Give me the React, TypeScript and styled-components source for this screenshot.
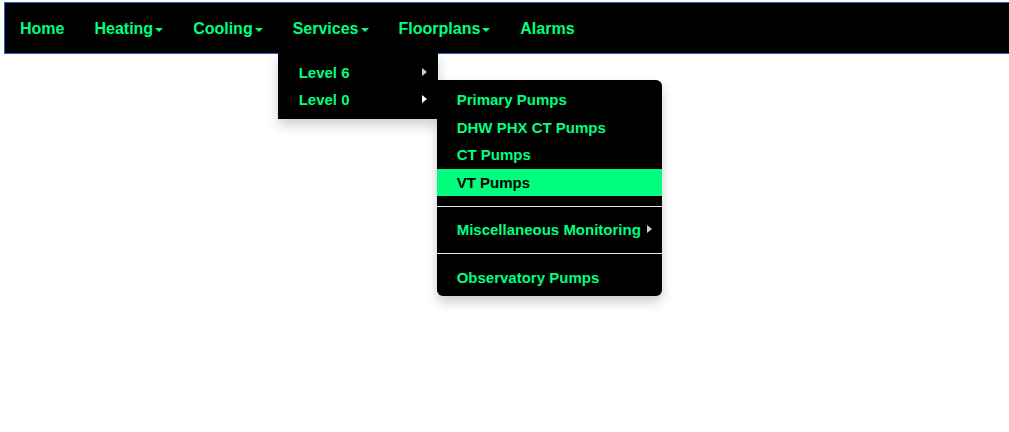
import { FC } from 'react';
import styled, { createGlobalStyle } from 'styled-components';

const GlobalStyle = createGlobalStyle`
  html, body {
    margin: 0;
    padding: 0;
    background: #fff;
    overflow: hidden;
  }
  body {
    font-family: "Liberation Sans", Arial, sans-serif;
  }
`;

type MenuEntry =
  | { kind: 'item'; label: string; active?: boolean; sub?: boolean }
  | { kind: 'divider' };

const pumpMenu: MenuEntry[] = [
  { kind: 'item', label: 'Primary Pumps' },
  { kind: 'item', label: 'DHW PHX CT Pumps' },
  { kind: 'item', label: 'CT Pumps' },
  { kind: 'item', label: 'VT Pumps', active: true },
  { kind: 'divider' },
  { kind: 'item', label: 'Miscellaneous Monitoring', sub: true },
  { kind: 'divider' },
  { kind: 'item', label: 'Observatory Pumps' },
];

const navItems = [
  { label: 'Home', caret: false },
  { label: 'Heating', caret: true },
  { label: 'Cooling', caret: true },
  { label: 'Services', caret: true, open: true },
  { label: 'Floorplans', caret: true },
  { label: 'Alarms', caret: false },
];

const ServicesMenu: FC = () => (
  <Dropdown>
    <DropItem>
      <DropLink>Level 6</DropLink>
      <SideCaret />
    </DropItem>
    <DropItem>
      <DropLink>Level 0</DropLink>
      <SideCaret $open />
      <SubMenu>
        {pumpMenu.map((entry, i) =>
          entry.kind === 'divider' ? (
            <Divider key={i} />
          ) : (
            <DropItem key={i}>
              <DropLink $active={entry.active} $tall>
                {entry.label}
              </DropLink>
              {entry.sub && <SideCaret />}
            </DropItem>
          ),
        )}
      </SubMenu>
    </DropItem>
  </Dropdown>
);

export default function App() {
  return (
    <>
      <GlobalStyle />
      <Page>
        <Navbar>
          <NavList>
            {navItems.map((item) => (
              <NavItem key={item.label}>
                <NavLink>
                  {item.label}
                  {item.caret && <DownCaret />}
                </NavLink>
                {item.open && <ServicesMenu />}
              </NavItem>
            ))}
          </NavList>
        </Navbar>
      </Page>
    </>
  );
}

const green = '#00ff7f';

const Page = styled.div`
  padding: 2px 0 0 4px;
  height: 430px;
`;

const Navbar = styled.nav`
  width: 1030px;
  min-height: 50px;
  background: #000;
  border: 1px solid #1f63c4;
`;

const NavList = styled.ul`
  display: flex;
  list-style: none;
  margin: 0;
  padding: 0;
`;

const NavItem = styled.li`
  position: relative;
`;

const NavLink = styled.a`
  display: block;
  padding: 16px 15px 14px;
  line-height: 20px;
  font-size: 16px;
  font-weight: bold;
  color: ${green};
  cursor: pointer;
`;

const DownCaret = styled.span`
  display: inline-block;
  width: 0;
  height: 0;
  margin-left: 2px;
  vertical-align: middle;
  border-top: 4px solid ${green};
  border-left: 4px solid transparent;
  border-right: 4px solid transparent;
`;

const Dropdown = styled.ul`
  position: absolute;
  top: 100%;
  left: 0;
  z-index: 10;
  box-sizing: border-box;
  width: 160px;
  margin: 0;
  padding: 5px 0;
  list-style: none;
  background: #000;
  border: 1px solid #000;
  box-shadow: 0 6px 12px rgba(0, 0, 0, 0.2);
`;

const DropItem = styled.li`
  position: relative;
`;

const DropLink = styled.a<{ $active?: boolean; $tall?: boolean }>`
  display: block;
  padding: 3px 20px;
  line-height: ${({ $tall }) => ($tall ? '21.5px' : '21px')};
  font-size: 15px;
  font-weight: bold;
  white-space: nowrap;
  color: ${({ $active }) => ($active ? '#000' : green)};
  background: ${({ $active }) => ($active ? green : 'transparent')};
  cursor: pointer;
`;

const SideCaret = styled.span<{ $open?: boolean }>`
  position: absolute;
  right: 10px;
  top: 50%;
  margin-top: -5px;
  width: 0;
  height: 0;
  border-left: 5px solid ${({ $open }) => ($open ? '#fff' : '#ccc')};
  border-top: 4px solid transparent;
  border-bottom: 4px solid transparent;
`;

const SubMenu = styled.ul`
  position: absolute;
  top: -6px;
  left: 100%;
  width: 225px;
  margin: 0;
  padding: 6px 0 5px;
  list-style: none;
  background: #000;
  border-radius: 0 6px 6px 6px;
  box-shadow: 0 6px 12px rgba(0, 0, 0, 0.2);
`;

const Divider = styled.li`
  height: 1px;
  margin: 9.5px 0;
  background: #e5e5e5;
`;
